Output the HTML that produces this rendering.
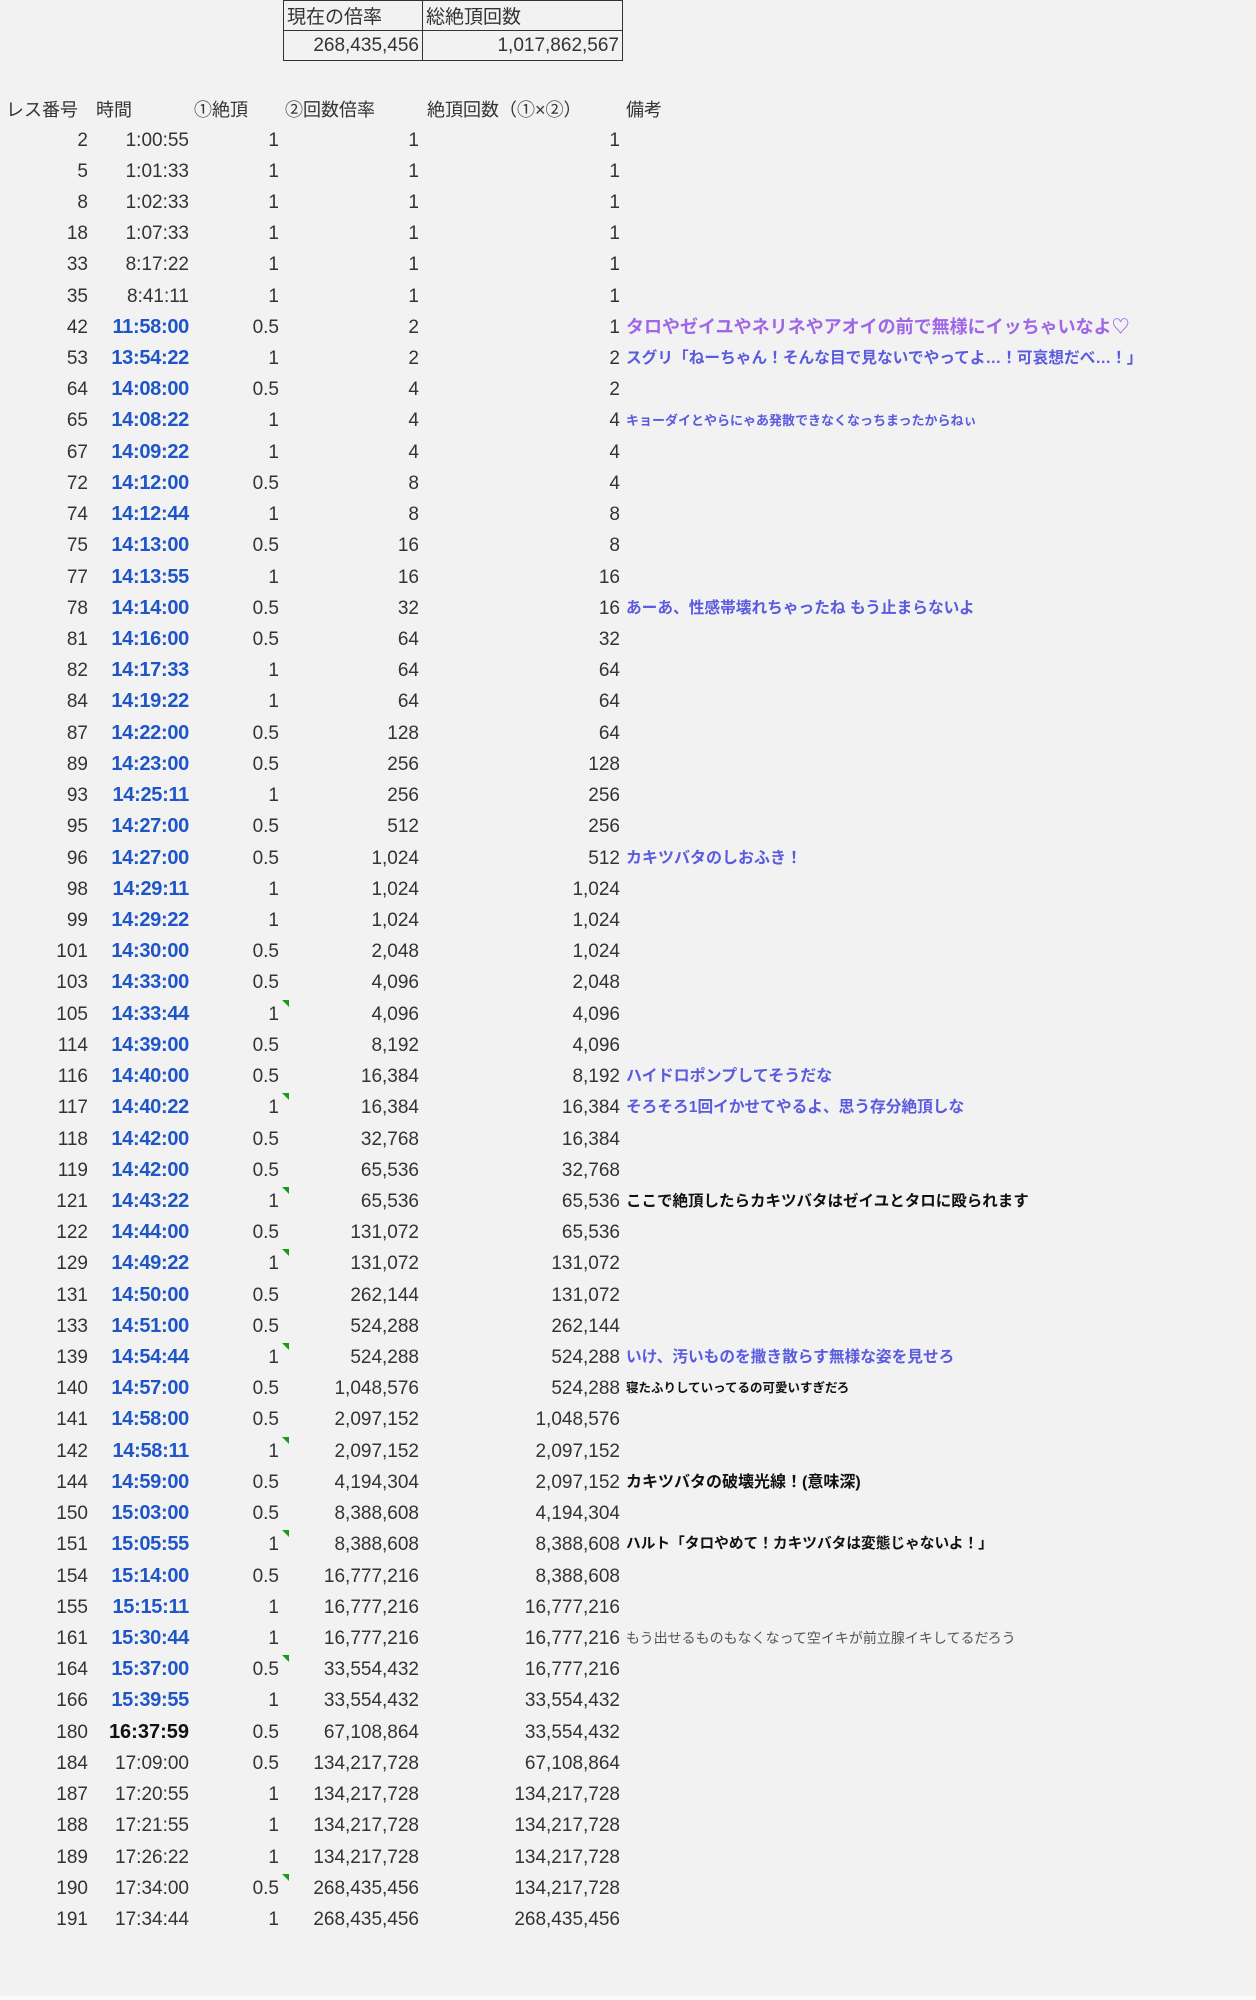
<!DOCTYPE html>
<html><head><meta charset="utf-8"><style>
html,body{margin:0;padding:0;}
body{width:1256px;height:2000px;background:#f2f2f2;position:relative;overflow:hidden;font-family:"Liberation Sans Narrow","Liberation Sans","Noto Sans CJK JP",sans-serif;font-size:19px;color:#333;}
.top{position:absolute;left:283px;top:0;border-collapse:collapse;}
.top td{border:1.5px solid #333;height:29px;padding:0 3px;font-size:19px;}
.hd{position:absolute;top:96px;font-family:"Liberation Sans","Noto Sans CJK JP",sans-serif;font-size:18px;white-space:nowrap;}
.rows{position:absolute;left:0;top:124.5px;width:1256px;}
.r{position:relative;height:31.22px;line-height:31.22px;white-space:nowrap;}
.r span{position:absolute;top:0;}
.a{right:1168px;text-align:right}
.b{right:1067px;}
.c{right:977px;}
.d{right:837px;}
.e{right:636px;}
.n{left:626px;font-family:"Liberation Sans","Noto Sans CJK JP",sans-serif;font-weight:bold;font-size:16px;color:#5b5be0;}
.bl{color:#1e56c8;font-weight:bold;font-family:"Liberation Sans",sans-serif;font-size:20px;letter-spacing:-0.3px;}
.bk{color:#111;font-weight:bold;font-family:"Liberation Sans",sans-serif;font-size:20px;}
.g::after{content:"";position:absolute;right:-10px;top:1px;border-top:7px solid #1a9a1a;border-left:7px solid transparent;}
</style></head><body>
<table class="top"><tr><td style="width:132px">現在の倍率</td><td style="width:193px">総絶頂回数</td></tr>
<tr><td style="text-align:right">268,435,456</td><td style="text-align:right">1,017,862,567</td></tr></table>
<div class="hd" style="left:6px">レス番号</div>
<div class="hd" style="left:96px">時間</div>
<div class="hd" style="left:194px">①絶頂</div>
<div class="hd" style="left:285px">②回数倍率</div>
<div class="hd" style="left:427px">絶頂回数（①×②）</div>
<div class="hd" style="left:626px">備考</div>
<div class="rows">
<div class="r"><span class="a">2</span><span class="b">1:00:55</span><span class="c">1</span><span class="d">1</span><span class="e">1</span></div>
<div class="r"><span class="a">5</span><span class="b">1:01:33</span><span class="c">1</span><span class="d">1</span><span class="e">1</span></div>
<div class="r"><span class="a">8</span><span class="b">1:02:33</span><span class="c">1</span><span class="d">1</span><span class="e">1</span></div>
<div class="r"><span class="a">18</span><span class="b">1:07:33</span><span class="c">1</span><span class="d">1</span><span class="e">1</span></div>
<div class="r"><span class="a">33</span><span class="b">8:17:22</span><span class="c">1</span><span class="d">1</span><span class="e">1</span></div>
<div class="r"><span class="a">35</span><span class="b">8:41:11</span><span class="c">1</span><span class="d">1</span><span class="e">1</span></div>
<div class="r"><span class="a">42</span><span class="b bl">11:58:00</span><span class="c">0.5</span><span class="d">2</span><span class="e">1</span><span class="n" style="color:#a066e8;font-size:18px">タロやゼイユやネリネやアオイの前で無様にイッちゃいなよ♡</span></div>
<div class="r"><span class="a">53</span><span class="b bl">13:54:22</span><span class="c">1</span><span class="d">2</span><span class="e">2</span><span class="n" style="font-size:15.7px">スグリ「ねーちゃん！そんな目で見ないでやってよ…！可哀想だべ…！」</span></div>
<div class="r"><span class="a">64</span><span class="b bl">14:08:00</span><span class="c">0.5</span><span class="d">4</span><span class="e">2</span></div>
<div class="r"><span class="a">65</span><span class="b bl">14:08:22</span><span class="c">1</span><span class="d">4</span><span class="e">4</span><span class="n" style="font-size:13px">キョーダイとやらにゃあ発散できなくなっちまったからねぃ</span></div>
<div class="r"><span class="a">67</span><span class="b bl">14:09:22</span><span class="c">1</span><span class="d">4</span><span class="e">4</span></div>
<div class="r"><span class="a">72</span><span class="b bl">14:12:00</span><span class="c">0.5</span><span class="d">8</span><span class="e">4</span></div>
<div class="r"><span class="a">74</span><span class="b bl">14:12:44</span><span class="c">1</span><span class="d">8</span><span class="e">8</span></div>
<div class="r"><span class="a">75</span><span class="b bl">14:13:00</span><span class="c">0.5</span><span class="d">16</span><span class="e">8</span></div>
<div class="r"><span class="a">77</span><span class="b bl">14:13:55</span><span class="c">1</span><span class="d">16</span><span class="e">16</span></div>
<div class="r"><span class="a">78</span><span class="b bl">14:14:00</span><span class="c">0.5</span><span class="d">32</span><span class="e">16</span><span class="n" style="font-size:15.7px">あーあ、性感帯壊れちゃったね もう止まらないよ</span></div>
<div class="r"><span class="a">81</span><span class="b bl">14:16:00</span><span class="c">0.5</span><span class="d">64</span><span class="e">32</span></div>
<div class="r"><span class="a">82</span><span class="b bl">14:17:33</span><span class="c">1</span><span class="d">64</span><span class="e">64</span></div>
<div class="r"><span class="a">84</span><span class="b bl">14:19:22</span><span class="c">1</span><span class="d">64</span><span class="e">64</span></div>
<div class="r"><span class="a">87</span><span class="b bl">14:22:00</span><span class="c">0.5</span><span class="d">128</span><span class="e">64</span></div>
<div class="r"><span class="a">89</span><span class="b bl">14:23:00</span><span class="c">0.5</span><span class="d">256</span><span class="e">128</span></div>
<div class="r"><span class="a">93</span><span class="b bl">14:25:11</span><span class="c">1</span><span class="d">256</span><span class="e">256</span></div>
<div class="r"><span class="a">95</span><span class="b bl">14:27:00</span><span class="c">0.5</span><span class="d">512</span><span class="e">256</span></div>
<div class="r"><span class="a">96</span><span class="b bl">14:27:00</span><span class="c">0.5</span><span class="d">1,024</span><span class="e">512</span><span class="n">カキツバタのしおふき！</span></div>
<div class="r"><span class="a">98</span><span class="b bl">14:29:11</span><span class="c">1</span><span class="d">1,024</span><span class="e">1,024</span></div>
<div class="r"><span class="a">99</span><span class="b bl">14:29:22</span><span class="c">1</span><span class="d">1,024</span><span class="e">1,024</span></div>
<div class="r"><span class="a">101</span><span class="b bl">14:30:00</span><span class="c">0.5</span><span class="d">2,048</span><span class="e">1,024</span></div>
<div class="r"><span class="a">103</span><span class="b bl">14:33:00</span><span class="c">0.5</span><span class="d">4,096</span><span class="e">2,048</span></div>
<div class="r"><span class="a">105</span><span class="b bl">14:33:44</span><span class="c g">1</span><span class="d">4,096</span><span class="e">4,096</span></div>
<div class="r"><span class="a">114</span><span class="b bl">14:39:00</span><span class="c">0.5</span><span class="d">8,192</span><span class="e">4,096</span></div>
<div class="r"><span class="a">116</span><span class="b bl">14:40:00</span><span class="c">0.5</span><span class="d">16,384</span><span class="e">8,192</span><span class="n">ハイドロポンプしてそうだな</span></div>
<div class="r"><span class="a">117</span><span class="b bl">14:40:22</span><span class="c g">1</span><span class="d">16,384</span><span class="e">16,384</span><span class="n" style="font-size:15.7px">そろそろ1回イかせてやるよ、思う存分絶頂しな</span></div>
<div class="r"><span class="a">118</span><span class="b bl">14:42:00</span><span class="c">0.5</span><span class="d">32,768</span><span class="e">16,384</span></div>
<div class="r"><span class="a">119</span><span class="b bl">14:42:00</span><span class="c">0.5</span><span class="d">65,536</span><span class="e">32,768</span></div>
<div class="r"><span class="a">121</span><span class="b bl">14:43:22</span><span class="c g">1</span><span class="d">65,536</span><span class="e">65,536</span><span class="n" style="color:#111;font-size:15.5px">ここで絶頂したらカキツバタはゼイユとタロに殴られます</span></div>
<div class="r"><span class="a">122</span><span class="b bl">14:44:00</span><span class="c">0.5</span><span class="d">131,072</span><span class="e">65,536</span></div>
<div class="r"><span class="a">129</span><span class="b bl">14:49:22</span><span class="c g">1</span><span class="d">131,072</span><span class="e">131,072</span></div>
<div class="r"><span class="a">131</span><span class="b bl">14:50:00</span><span class="c">0.5</span><span class="d">262,144</span><span class="e">131,072</span></div>
<div class="r"><span class="a">133</span><span class="b bl">14:51:00</span><span class="c">0.5</span><span class="d">524,288</span><span class="e">262,144</span></div>
<div class="r"><span class="a">139</span><span class="b bl">14:54:44</span><span class="c g">1</span><span class="d">524,288</span><span class="e">524,288</span><span class="n" style="font-size:15.7px">いけ、汚いものを撒き散らす無様な姿を見せろ</span></div>
<div class="r"><span class="a">140</span><span class="b bl">14:57:00</span><span class="c">0.5</span><span class="d">1,048,576</span><span class="e">524,288</span><span class="n" style="color:#111;font-size:12.5px">寝たふりしていってるの可愛いすぎだろ</span></div>
<div class="r"><span class="a">141</span><span class="b bl">14:58:00</span><span class="c">0.5</span><span class="d">2,097,152</span><span class="e">1,048,576</span></div>
<div class="r"><span class="a">142</span><span class="b bl">14:58:11</span><span class="c g">1</span><span class="d">2,097,152</span><span class="e">2,097,152</span></div>
<div class="r"><span class="a">144</span><span class="b bl">14:59:00</span><span class="c">0.5</span><span class="d">4,194,304</span><span class="e">2,097,152</span><span class="n" style="color:#111">カキツバタの破壊光線！(意味深)</span></div>
<div class="r"><span class="a">150</span><span class="b bl">15:03:00</span><span class="c">0.5</span><span class="d">8,388,608</span><span class="e">4,194,304</span></div>
<div class="r"><span class="a">151</span><span class="b bl">15:05:55</span><span class="c g">1</span><span class="d">8,388,608</span><span class="e">8,388,608</span><span class="n" style="color:#111;font-size:14.7px">ハルト「タロやめて！カキツバタは変態じゃないよ！」</span></div>
<div class="r"><span class="a">154</span><span class="b bl">15:14:00</span><span class="c">0.5</span><span class="d">16,777,216</span><span class="e">8,388,608</span></div>
<div class="r"><span class="a">155</span><span class="b bl">15:15:11</span><span class="c">1</span><span class="d">16,777,216</span><span class="e">16,777,216</span></div>
<div class="r"><span class="a">161</span><span class="b bl">15:30:44</span><span class="c">1</span><span class="d">16,777,216</span><span class="e">16,777,216</span><span class="n" style="color:#555;font-weight:normal;font-size:14px">もう出せるものもなくなって空イキが前立腺イキしてるだろう</span></div>
<div class="r"><span class="a">164</span><span class="b bl">15:37:00</span><span class="c g">0.5</span><span class="d">33,554,432</span><span class="e">16,777,216</span></div>
<div class="r"><span class="a">166</span><span class="b bl">15:39:55</span><span class="c">1</span><span class="d">33,554,432</span><span class="e">33,554,432</span></div>
<div class="r"><span class="a">180</span><span class="b bk">16:37:59</span><span class="c">0.5</span><span class="d">67,108,864</span><span class="e">33,554,432</span></div>
<div class="r"><span class="a">184</span><span class="b">17:09:00</span><span class="c">0.5</span><span class="d">134,217,728</span><span class="e">67,108,864</span></div>
<div class="r"><span class="a">187</span><span class="b">17:20:55</span><span class="c">1</span><span class="d">134,217,728</span><span class="e">134,217,728</span></div>
<div class="r"><span class="a">188</span><span class="b">17:21:55</span><span class="c">1</span><span class="d">134,217,728</span><span class="e">134,217,728</span></div>
<div class="r"><span class="a">189</span><span class="b">17:26:22</span><span class="c">1</span><span class="d">134,217,728</span><span class="e">134,217,728</span></div>
<div class="r"><span class="a">190</span><span class="b">17:34:00</span><span class="c g">0.5</span><span class="d">268,435,456</span><span class="e">134,217,728</span></div>
<div class="r"><span class="a">191</span><span class="b">17:34:44</span><span class="c">1</span><span class="d">268,435,456</span><span class="e">268,435,456</span></div>
</div>
<div style="position:absolute;left:0;top:1996px;width:1256px;height:4px;background:#fafafa"></div>
</body></html>
